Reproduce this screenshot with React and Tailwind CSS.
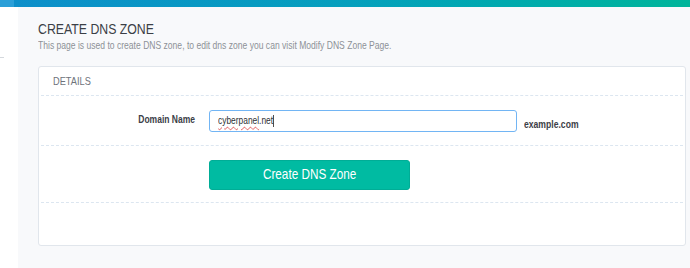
export default function App() {
  return (
    <div className="w-[690px] h-[268px] overflow-hidden bg-white flex flex-col" style={{ fontFamily: '"Liberation Sans", Arial, sans-serif' }}>
      <div className="h-[7px] flex shrink-0">
        <div className="w-[14px] bg-[#2a9fd8]" />
        <div className="flex-1 bg-gradient-to-r from-[#0d8fca] via-[#06a0bd] to-[#00b59a]" />
      </div>
      <div className="flex flex-1">
        <div className="w-[18px] bg-white flex flex-col">
          <div className="mt-[50px] w-[4px] h-px bg-[#d4d8dd]" />
        </div>
        <div className="flex-1 bg-[#f8f9fb] pl-[20px] pr-[4px] pt-[12px]">
          <h1 className="text-[15px] leading-[20px] text-[#3b3f46] whitespace-nowrap origin-left scale-x-[0.82]">CREATE DNS ZONE</h1>
          <p className="text-[10.5px] leading-[13px] text-[#8d9197] whitespace-nowrap origin-left scale-x-[0.815]">This page is used to create DNS zone, to edit dns zone you can visit Modify DNS Zone Page.</p>
          <div className="mt-[14px] h-[180px] bg-white border border-[#e1e6ec] rounded-[3px] px-[2px] flex flex-col">
            <div className="h-[29px] pl-[12px] flex items-center text-[11px] text-[#6e737b] border-b border-dashed border-[#dce6f0]">
              <span className="inline-block origin-left scale-x-[0.84]">DETAILS</span>
            </div>
            <div className="h-[50px] flex items-center border-b border-dashed border-[#dce6f0]">
              <div className="w-[154px] text-right text-[10.5px] font-bold text-[#3c4047] -mt-[1px] origin-right scale-x-[0.81] whitespace-nowrap">Domain Name</div>
              <div className="ml-[14px] w-[308px] h-[22px] border border-[#72b5f4] rounded-[3px] flex items-center pl-[8px] text-[10.5px] text-[#2d3035]">
                <span className="inline-flex items-center origin-left scale-x-[0.8] whitespace-nowrap">
                  <span className="underline decoration-wavy decoration-[#e05050] decoration-[0.5px] underline-offset-[2px]">cyberpanel</span>
                  <span>.net</span>
                  <span className="w-px h-[12px] bg-[#222]" />
                </span>
              </div>
              <div className="ml-[7px] mt-[9px] text-[10.5px] font-bold text-[#3c4047] origin-left scale-x-[0.82] whitespace-nowrap">example.com</div>
            </div>
            <div className="h-[57px] flex items-center border-b border-dashed border-[#dce6f0]">
              <button className="ml-[168px] mt-[2px] w-[201px] h-[30px] bg-[#00bba2] rounded-[3px] text-white text-[14.5px] border border-[#00ad96]">
                <span className="inline-block scale-x-[0.81] whitespace-nowrap">Create DNS Zone</span>
              </button>
            </div>
          </div>
        </div>
      </div>
    </div>
  );
}
